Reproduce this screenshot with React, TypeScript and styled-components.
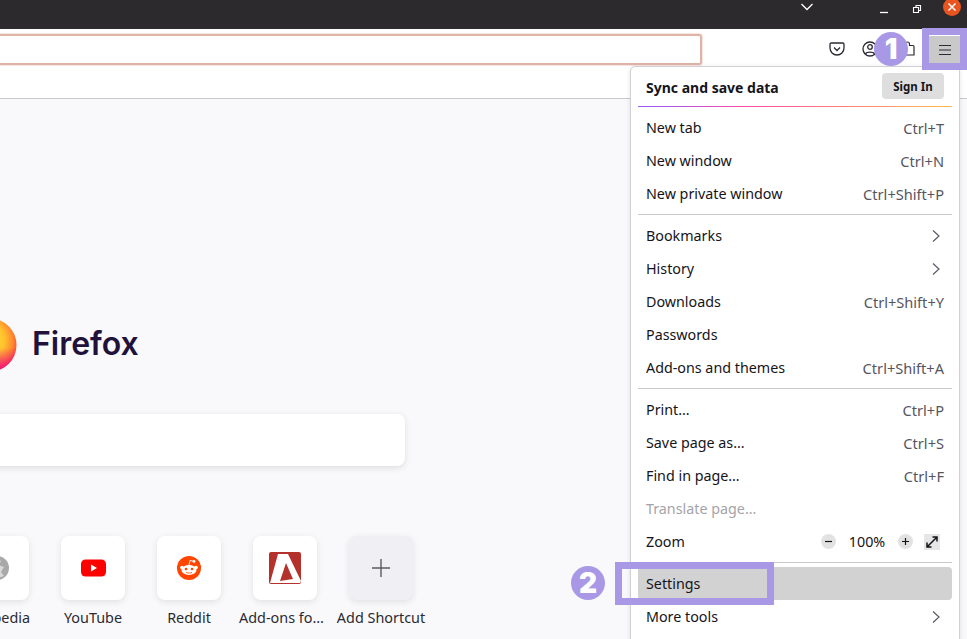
import React from "react";
import styled, { createGlobalStyle } from "styled-components";

const Global = createGlobalStyle`
  html, body { margin: 0; padding: 0; background: #f9f9fb; }
  * { box-sizing: border-box; }
`;

const fontStack = `"Noto Sans", "Open Sans", sans-serif`;
const accent = "#a998e5";

const Page = styled.div`
  position: relative;
  width: 967px;
  height: 639px;
  overflow: hidden;
  background: #f9f9fb;
  font-family: ${fontStack};
  color: #15141a;
`;

const TitleBar = styled.div`
  height: 29px;
  background: #2c2a2c;
  display: flex;
  align-items: flex-start;
  color: #fff;
`;
const TitleChevron = styled.svg`
  margin: 2px 0 0 800px;
  width: 14px;
  height: 10px;
`;
const WinIcon = styled.svg<{ $ml: number }>`
  margin: 3px 0 0 ${(p) => p.$ml}px;
  width: 12px;
  height: 12px;
`;
const CloseButton = styled.div`
  margin: -2px 0 0 20px;
  width: 18px;
  height: 18px;
  border-radius: 50%;
  background: #e95420;
  display: flex;
  align-items: center;
  justify-content: center;
`;

const Toolbar = styled.div`
  height: 37px;
  background: #fff;
  display: flex;
  align-items: flex-start;
  padding: 5px 7px 0 0;
`;
const UrlBar = styled.div`
  margin-left: -10px;
  width: 712px;
  height: 31px;
  background: #fff;
  border: 2px solid #e0b3a7;
  border-radius: 3px;
  box-shadow: 0 0 0 1px #f8e6e0;
`;
const ToolIcons = styled.div`
  margin-left: auto;
  display: flex;
  align-items: center;
  gap: 1px;
`;
const ToolButton = styled.div<{ $active?: boolean; $ml?: number }>`
  width: ${(p) => (p.$active ? 31 : 32)}px;
  height: ${(p) => (p.$active ? 28 : 30)}px;
  margin-left: ${(p) => p.$ml ?? 0}px;
  margin-top: ${(p) => (p.$active ? 1 : 0)}px;
  display: flex;
  align-items: center;
  justify-content: center;
  background: ${(p) => (p.$active ? "#c9c9c9" : "transparent")};
  color: #2b2a33;
`;

const BookmarkBar = styled.div`
  height: 33px;
  background: #fff;
  border-bottom: 1px solid #c9c9cb;
`;

const Content = styled.main`
  margin-left: -51px;
  padding-top: 219px;
  display: flex;
  flex-direction: column;
  align-items: flex-start;
`;
const Hero = styled.div`
  margin-left: 14px;
  display: flex;
  align-items: center;
  gap: 15px;
`;
const LogoGlobe = styled.svg`
  width: 54px;
  height: 54px;
  flex: none;
`;
const Wordmark = styled.div`
  font-family: "Inter", sans-serif;
  font-size: 32px;
  font-weight: 600;
  color: #20123a;
  line-height: 52px;
  height: 54px;
`;
const SearchBox = styled.div`
  margin: 42px 0 0 11px;
  width: 445px;
  height: 52px;
  background: #fff;
  border-radius: 8px;
  box-shadow: 0 2px 6px rgba(58, 57, 68, 0.14);
`;
const TileRow = styled.div`
  margin-top: 70px;
  display: flex;
`;
const TileCell = styled.div`
  width: 96px;
  display: flex;
  flex-direction: column;
  align-items: center;
`;
const Tile = styled.div<{ $muted?: boolean }>`
  width: 64px;
  height: 64px;
  border-radius: 8px;
  background: ${(p) => (p.$muted ? "#f0f0f4" : "#fff")};
  box-shadow: 0 2px 6px rgba(58, 57, 68, 0.12);
  display: flex;
  align-items: center;
  justify-content: center;
`;
const TileLabel = styled.div<{ $truncated?: boolean }>`
  margin-top: 8px;
  width: 96px;
  padding-left: ${(p) => (p.$truncated ? 2 : 0)}px;
  font-size: 14.4px;
  line-height: 20px;
  text-align: ${(p) => (p.$truncated ? "left" : "center")};
  white-space: nowrap;
  color: #2b2a33;
`;

const Menu = styled.div`
  position: absolute;
  left: 630px;
  top: 66px;
  width: 330px;
  height: 590px;
  padding: 0 7px;
  background: #fff;
  border: 1px solid #cfcfd4;
  border-radius: 5px;
  box-shadow: 0 1px 5px rgba(0, 0, 0, 0.1);
`;
const MenuHeader = styled.div`
  height: 39px;
  padding: 0 8px;
  display: flex;
  align-items: center;
  justify-content: space-between;
`;
const MenuTitle = styled.div`
  font-size: 14px;
  font-weight: 700;
  margin-top: 1px;
`;
const SignIn = styled.div`
  width: 62px;
  height: 26px;
  margin-top: -1px;
  border-radius: 4px;
  background: #dedede;
  font-size: 11.5px;
  font-weight: 700;
  display: flex;
  align-items: center;
  justify-content: center;
`;
const GradientLine = styled.div`
  height: 1px;
  margin-bottom: 4px;
  background: linear-gradient(90deg, #9059ff, #ff4aa2 35%, #ffbd4f);
`;
const Sep = styled.div`
  height: 1px;
  margin: 4px 0;
  background: #c8c8ca;
`;
const Row = styled.div<{ $hover?: boolean }>`
  height: 33px;
  padding: 0 8px;
  display: flex;
  align-items: center;
  justify-content: space-between;
  border-radius: 4px;
  background: ${(p) => (p.$hover ? "#d2d2d2" : "transparent")};
`;
const RowLabel = styled.span<{ $disabled?: boolean }>`
  font-size: 14.3px;
  color: ${(p) => (p.$disabled ? "#a4a4a8" : "#15141a")};
`;
const Shortcut = styled.span`
  font-size: 14.6px;
  color: #55555f;
`;
const ArrowIcon = styled.svg`
  width: 10px;
  height: 14px;
  margin-right: 3px;
`;
const ZoomControls = styled.div`
  display: flex;
  align-items: center;
`;
const ZoomRound = styled.div`
  width: 15px;
  height: 15px;
  border-radius: 50%;
  background: #e2e2e2;
  display: flex;
  align-items: center;
  justify-content: center;
`;
const ZoomValue = styled.span`
  width: 62px;
  text-align: center;
  font-size: 14.3px;
`;
const ZoomExpand = styled.div`
  width: 16px;
  height: 16px;
  margin: 0 4px 0 11px;
  background: #e6e6e6;
  display: flex;
  align-items: center;
  justify-content: center;
`;

const Highlight = styled.div<{ $x: number; $y: number; $w: number; $h: number }>`
  position: absolute;
  left: ${(p) => p.$x}px;
  top: ${(p) => p.$y}px;
  width: ${(p) => p.$w}px;
  height: ${(p) => p.$h}px;
  border: 7px solid ${accent};
`;
const Badge = styled.div<{ $x: number; $y: number }>`
  position: absolute;
  left: ${(p) => p.$x}px;
  top: ${(p) => p.$y}px;
  width: 34px;
  height: 34px;
  border-radius: 50%;
  background: ${accent};
  color: #fff;
  font-family: "Inter", sans-serif;
  font-size: 28px;
  font-weight: 900;
  display: flex;
  align-items: center;
  justify-content: center;
`;

const Chevron = () => (
  <ArrowIcon viewBox="0 0 10 14" fill="none" stroke="#5b5b66" strokeWidth="1.2">
    <path d="M2 1.5 8 7l-6 5.5" />
  </ArrowIcon>
);

const YouTube = () => (
  <svg width="25" height="18" viewBox="0 0 25 18">
    <rect width="25" height="17" y=".5" rx="4.5" fill="#f00" />
    <path d="M10 5.5v7l6-3.5z" fill="#fff" />
  </svg>
);

const Reddit = () => (
  <svg width="24" height="24" viewBox="0 0 24 24">
    <circle cx="12" cy="12" r="12" fill="#ff4500" />
    <ellipse cx="12" cy="14" rx="7.5" ry="5" fill="#fff" />
    <circle cx="5" cy="11.5" r="1.8" fill="#fff" />
    <circle cx="19" cy="11.5" r="1.8" fill="#fff" />
    <circle cx="9" cy="13" r="1.3" fill="#ff4500" />
    <circle cx="15" cy="13" r="1.3" fill="#ff4500" />
    <path d="M9 16.2c1.8 1.2 4.2 1.2 6 0" stroke="#ff4500" strokeWidth=".8" fill="none" />
    <path d="M12 9l1-4.5 3.4.8" stroke="#fff" strokeWidth=".9" fill="none" />
    <circle cx="17" cy="5.4" r="1.4" fill="#fff" />
  </svg>
);

const AddOns = () => (
  <svg width="32" height="32" viewBox="0 0 32 32">
    <rect width="32" height="32" rx="2" fill="#b5322c" />
    <path
      fillRule="evenodd"
      d="M9 2H19L32 29 31 31 1 31ZM17 11 11 29 24 27Z"
      fill="#fff"
    />
  </svg>
);

const Globe = () => (
  <svg width="24" height="24" viewBox="0 0 24 24">
    <circle cx="12" cy="12" r="12" fill="#a9a9a9" />
    <path d="M12 2l4 3-2 4 5 2-3 5 3 4-6 2-2-6 4-4-5-3zM4 8l3 2-2 4z" fill="#d8d8d8" />
  </svg>
);

type Item = { label: string; shortcut?: string; arrow?: boolean; disabled?: boolean };

const group1: Item[] = [
  { label: "New tab", shortcut: "Ctrl+T" },
  { label: "New window", shortcut: "Ctrl+N" },
  { label: "New private window", shortcut: "Ctrl+Shift+P" },
];
const group2: Item[] = [
  { label: "Bookmarks", arrow: true },
  { label: "History", arrow: true },
  { label: "Downloads", shortcut: "Ctrl+Shift+Y" },
  { label: "Passwords" },
  { label: "Add-ons and themes", shortcut: "Ctrl+Shift+A" },
];
const group3: Item[] = [
  { label: "Print…", shortcut: "Ctrl+P" },
  { label: "Save page as…", shortcut: "Ctrl+S" },
  { label: "Find in page…", shortcut: "Ctrl+F" },
  { label: "Translate page…", disabled: true },
];

const MenuRows = ({ items }: { items: Item[] }) => (
  <>
    {items.map((it) => (
      <Row key={it.label}>
        <RowLabel $disabled={it.disabled}>{it.label}</RowLabel>
        {it.shortcut && <Shortcut>{it.shortcut}</Shortcut>}
        {it.arrow && <Chevron />}
      </Row>
    ))}
  </>
);

export default function App() {
  return (
    <Page>
      <Global />
      <TitleBar>
        <TitleChevron viewBox="0 0 14 10" fill="none" stroke="#fff" strokeWidth="1.3">
          <path d="M1.5 2 7 7.5 12.5 2" />
        </TitleChevron>
        <WinIcon $ml={64} viewBox="0 0 12 12" stroke="#fff" strokeWidth="1.3">
          <path d="M2 9.5h8" />
        </WinIcon>
        <WinIcon $ml={21} viewBox="0 0 12 12" fill="none" stroke="#fff" strokeWidth="1.1">
          <path d="M2.5 4.5h5v5h-5zM5 4V2.5h4.500v5H8" />
        </WinIcon>
        <CloseButton>
          <svg width="10" height="10" viewBox="0 0 10 10" stroke="#fff" strokeWidth="1.5">
            <path d="M1.5 1.5l7 7M8.5 1.5l-7 7" />
          </svg>
        </CloseButton>
      </TitleBar>

      <Toolbar>
        <UrlBar />
        <ToolIcons>
          <ToolButton>
            <svg width="16" height="16" viewBox="0 0 16 16" fill="none" stroke="currentColor" strokeWidth="1.3">
              <path d="M2.2 2h11.6c.7 0 1.2.5 1.2 1.2V7c0 4-3.200 7-7 7s-7-3-7-7V3.200C1 2.500 1.500 2 2.200 2z" />
              <path d="M5 6.500l3 3 3-3" />
            </svg>
          </ToolButton>
          <ToolButton>
            <svg width="16" height="16" viewBox="0 0 16 16" fill="none" stroke="currentColor" strokeWidth="1.3">
              <circle cx="8" cy="8" r="7" />
              <circle cx="8" cy="6" r="2.300" />
              <path d="M3.500 13c1-2.500 8-2.500 9 0" />
            </svg>
          </ToolButton>
          <ToolButton $ml={5}>
            <svg width="16" height="16" viewBox="0 0 16 16" fill="none" stroke="currentColor" strokeWidth="1.2">
              <path d="M2 4.500h3.500V3a2 2 0 0 1 4 0v1.500H13c.6 0 1 .4 1 1V14H2z" />
            </svg>
          </ToolButton>
          <ToolButton $active $ml={4}>
            <svg width="14" height="12" viewBox="0 0 14 12" stroke="currentColor" strokeWidth="1.1">
              <path d="M1 1.500h12M1 6h12M1 10.500h12" />
            </svg>
          </ToolButton>
        </ToolIcons>
      </Toolbar>
      <BookmarkBar />

      <Content>
        <Hero>
          <LogoGlobe viewBox="0 0 54 54">
            <defs>
              <radialGradient id="fx" cx="0.4" cy="0.42" r="0.62">
                <stop offset="0" stopColor="#ffe03c" />
                <stop offset="0.6" stopColor="#ffc22e" />
                <stop offset="0.85" stopColor="#ff8a2e" />
                <stop offset="1" stopColor="#ff4f3c" />
              </radialGradient>
              <linearGradient id="fxBottom" x1="0.5" y1="0.55" x2="0.5" y2="1">
                <stop offset="0" stopColor="#f0147d" stopOpacity="0" />
                <stop offset="1" stopColor="#f0147d" />
              </linearGradient>
            </defs>
            <circle cx="27" cy="27" r="26.500" fill="url(#fx)" />
            <circle cx="27" cy="27" r="26.500" fill="url(#fxBottom)" />
          </LogoGlobe>
          <Wordmark>Firefox</Wordmark>
        </Hero>
        <SearchBox />
        <TileRow>
          <TileCell>
            <Tile><Globe /></Tile>
            <TileLabel>Wikipedia</TileLabel>
          </TileCell>
          <TileCell>
            <Tile><YouTube /></Tile>
            <TileLabel>YouTube</TileLabel>
          </TileCell>
          <TileCell>
            <Tile><Reddit /></Tile>
            <TileLabel>Reddit</TileLabel>
          </TileCell>
          <TileCell>
            <Tile><AddOns /></Tile>
            <TileLabel $truncated>Add-ons fo…</TileLabel>
          </TileCell>
          <TileCell>
            <Tile $muted>
              <svg width="18" height="18" viewBox="0 0 18 18" stroke="#5b5b66" strokeWidth="1.400">
                <path d="M9 0v18M0 9h18" />
              </svg>
            </Tile>
            <TileLabel>Add Shortcut</TileLabel>
          </TileCell>
        </TileRow>
      </Content>

      <Menu>
        <MenuHeader>
          <MenuTitle>Sync and save data</MenuTitle>
          <SignIn>Sign In</SignIn>
        </MenuHeader>
        <GradientLine />
        <MenuRows items={group1} />
        <Sep />
        <MenuRows items={group2} />
        <Sep />
        <MenuRows items={group3} />
        <Row>
          <RowLabel>Zoom</RowLabel>
          <ZoomControls>
            <ZoomRound>
              <svg width="9" height="9" viewBox="0 0 9 9" stroke="#15141a" strokeWidth="1.200">
                <path d="M1 4.500h7" />
              </svg>
            </ZoomRound>
            <ZoomValue>100%</ZoomValue>
            <ZoomRound>
              <svg width="9" height="9" viewBox="0 0 9 9" stroke="#15141a" strokeWidth="1.200">
                <path d="M1 4.500h7M4.500 1v7" />
              </svg>
            </ZoomRound>
            <ZoomExpand>
              <svg width="14" height="14" viewBox="0 0 14 14" fill="none" stroke="#15141a" strokeWidth="1.500">
                <path d="M2 12 12 2M7.500 2H12v4.500M2 7.500V12h4.500" />
              </svg>
            </ZoomExpand>
          </ZoomControls>
        </Row>
        <Sep />
        <Row $hover>
          <RowLabel>Settings</RowLabel>
        </Row>
        <MenuRows items={[{ label: "More tools", arrow: true }]} />
      </Menu>

      <Highlight $x={922} $y={28} $w={45} $h={42} />
      <Badge $x={874} $y={32}>1</Badge>
      <Highlight $x={615} $y={562} $w={159} $h={43} />
      <Badge $x={571} $y={566}>2</Badge>
    </Page>
  );
}
